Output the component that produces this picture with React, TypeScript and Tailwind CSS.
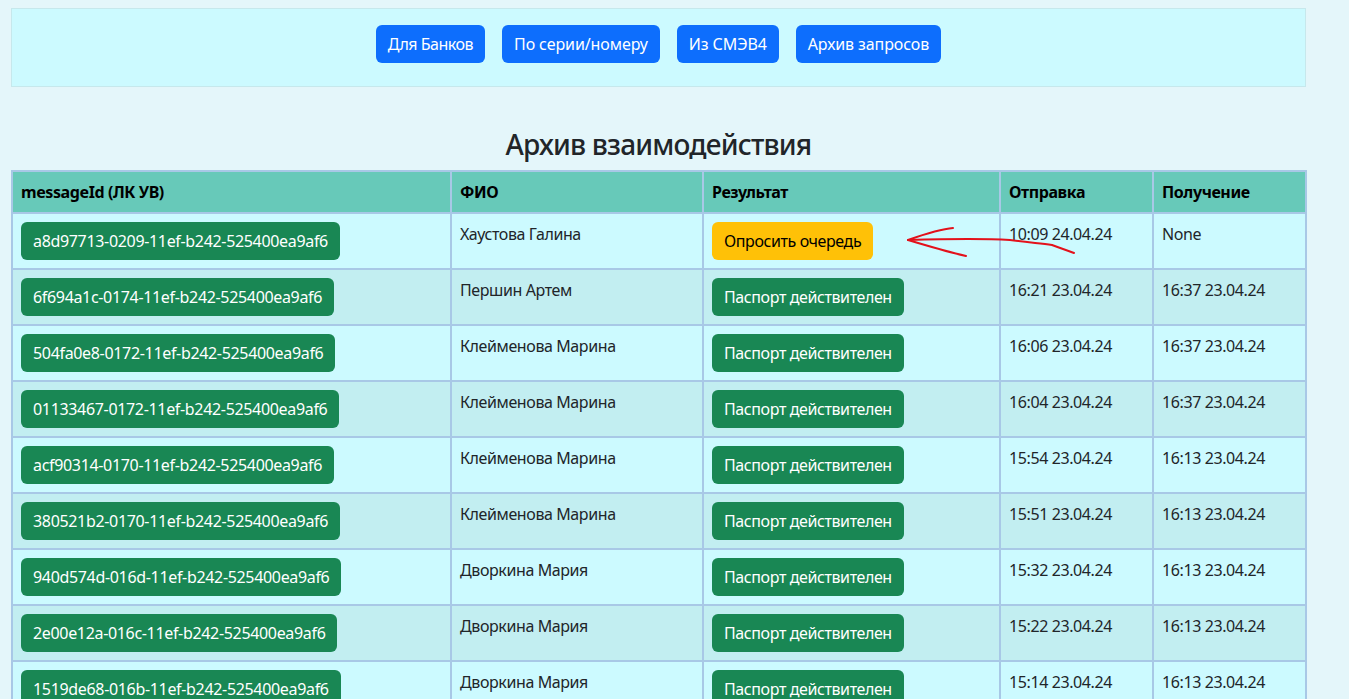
import React from "react";

type Row = { id: string; name: string; sent: string; recv: string; pending?: boolean };

const rows: Row[] = [
  { id: "a8d97713-0209-11ef-b242-525400ea9af6", name: "Хаустова Галина", sent: "10:09 24.04.24", recv: "None", pending: true },
  { id: "6f694a1c-0174-11ef-b242-525400ea9af6", name: "Першин Артем", sent: "16:21 23.04.24", recv: "16:37 23.04.24" },
  { id: "504fa0e8-0172-11ef-b242-525400ea9af6", name: "Клейменова Марина", sent: "16:06 23.04.24", recv: "16:37 23.04.24" },
  { id: "01133467-0172-11ef-b242-525400ea9af6", name: "Клейменова Марина", sent: "16:04 23.04.24", recv: "16:37 23.04.24" },
  { id: "acf90314-0170-11ef-b242-525400ea9af6", name: "Клейменова Марина", sent: "15:54 23.04.24", recv: "16:13 23.04.24" },
  { id: "380521b2-0170-11ef-b242-525400ea9af6", name: "Клейменова Марина", sent: "15:51 23.04.24", recv: "16:13 23.04.24" },
  { id: "940d574d-016d-11ef-b242-525400ea9af6", name: "Дворкина Мария", sent: "15:32 23.04.24", recv: "16:13 23.04.24" },
  { id: "2e00e12a-016c-11ef-b242-525400ea9af6", name: "Дворкина Мария", sent: "15:22 23.04.24", recv: "16:13 23.04.24" },
  { id: "1519de68-016b-11ef-b242-525400ea9af6", name: "Дворкина Мария", sent: "15:14 23.04.24", recv: "16:13 23.04.24" },
  { id: "0a7c51f2-016a-11ef-b242-525400ea9af6", name: "Дворкина Мария", sent: "15:02 23.04.24", recv: "16:13 23.04.24" },
];

const navButtons = ["Для Банков", "По серии/номеру", "Из СМЭВ4", "Архив запросов"];

export default function App() {
  return (
    <div
      className="relative min-h-screen bg-[#e4f6fa] text-[#212529] pt-2 pb-10"
      style={{ fontFamily: '"Noto Sans", "Open Sans", sans-serif' }}
    >
      <div className="ml-[11px] w-[1295px]">
        <div className="border border-[#c6e8ec] bg-[#ccfaff] pt-4 pb-[23px] flex justify-center gap-[17px]">
          {navButtons.map((b, i) => (
            <button
              key={b}
              className={
                "h-[38px] px-3 rounded-[6px] bg-[#0d6efd] text-white text-[16px] leading-6 " +
                (i === 0 ? "tracking-[-0.5px]" : "tracking-[-0.1px]")
              }
            >
              {b}
            </button>
          ))}
        </div>

        <h3 className="mt-[41px] mb-2 text-center text-[28px] leading-[1.2] font-medium tracking-[-0.8px]">
          Архив взаимодействия
        </h3>

        <table className="w-[1294px] table-fixed border-collapse border-2 border-[#a8c8e6] text-[16px] leading-6 tracking-[-0.4px]">
          <colgroup>
            <col className="w-[439px]" />
            <col className="w-[252px]" />
            <col className="w-[297px]" />
            <col className="w-[153px]" />
            <col className="w-[153px]" />
          </colgroup>
          <thead>
            <tr className="bg-[#67c9b9]">
              {["messageId (ЛК УВ)", "ФИО", "Результат", "Отправка", "Получение"].map((h) => (
                <th key={h} className="border-2 border-[#a8c8e6] px-2 py-2 text-left font-bold text-black">
                  {h}
                </th>
              ))}
            </tr>
          </thead>
          <tbody>
            {rows.map((r, i) => (
              <tr key={r.id} className={i % 2 === 0 ? "bg-[#ccfaff]" : "bg-[#c2eef1]"}>
                <td className="border-2 border-[#a8c8e6] p-2 align-top">
                  <button className="h-[38px] px-3 rounded-[6px] bg-[#198754] text-white tracking-[-0.33px]">{r.id}</button>
                </td>
                <td className="border-2 border-[#a8c8e6] p-2 align-top">{r.name}</td>
                <td className="border-2 border-[#a8c8e6] p-2 align-top">
                  {r.pending ? (
                    <button className="h-[38px] px-3 rounded-[6px] bg-[#ffc107] text-black">Опросить очередь</button>
                  ) : (
                    <button className="h-[38px] px-3 rounded-[6px] bg-[#198754] text-white">Паспорт действителен</button>
                  )}
                </td>
                <td className="border-2 border-[#a8c8e6] p-2 align-top">{r.sent}</td>
                <td className="border-2 border-[#a8c8e6] p-2 align-top">{r.recv}</td>
              </tr>
            ))}
          </tbody>
        </table>
      </div>

      <svg
        className="absolute left-0 top-0 pointer-events-none"
        width="1349"
        height="699"
        viewBox="0 0 1349 699"
        fill="none"
      >
        <path
          d="M1074 253 C1066 250 1060 248 1052 245 C1040 243 1030 243 1010 240 C980 238 940 239 908 240"
          stroke="#e3111b"
          strokeWidth="2"
          strokeLinecap="round"
        />
        <path d="M908 240 C925 234 940 229 953 228" stroke="#e3111b" strokeWidth="2" strokeLinecap="round" />
        <path d="M908 240 C928 246 948 252 966 256" stroke="#e3111b" strokeWidth="2" strokeLinecap="round" />
      </svg>
    </div>
  );
}
